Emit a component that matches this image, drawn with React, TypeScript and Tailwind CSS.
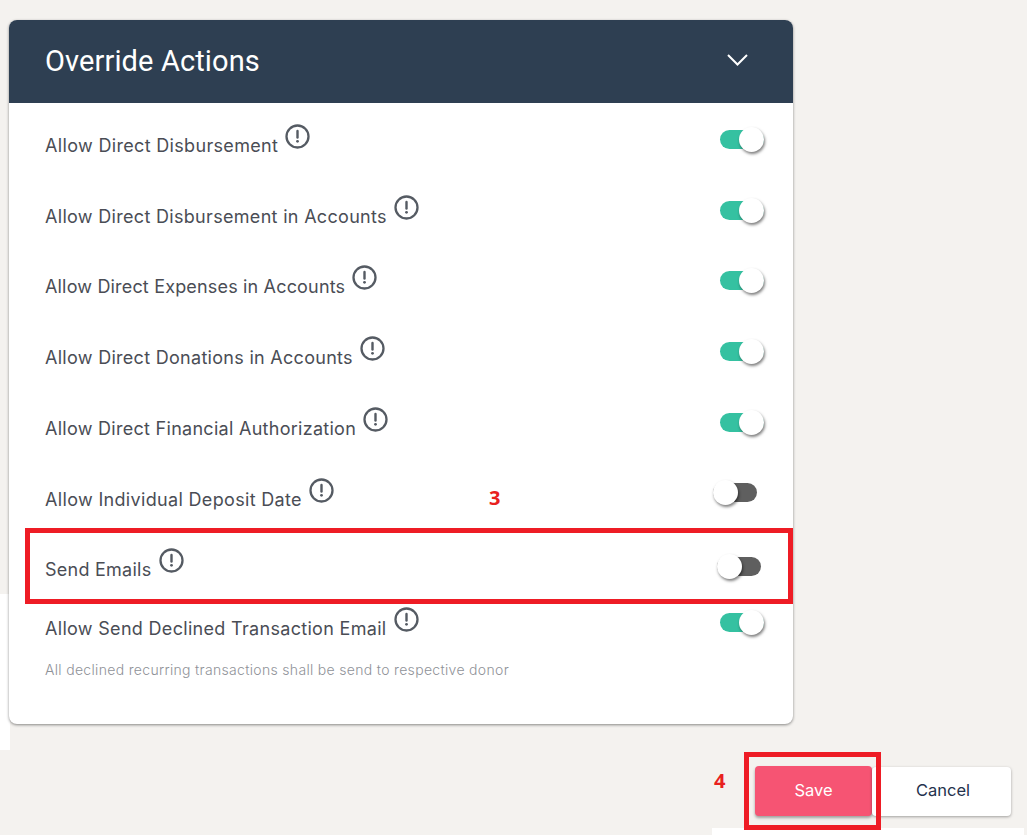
const rows = [
  { label: "Allow Direct Disbursement", labelW: "w-[233px]", track: "tracking-[0.33px]", on: true, toggle: "-mt-[12px] mr-[29px]" },
  { label: "Allow Direct Disbursement in Accounts", labelW: "w-[342px]", track: "tracking-[0.31px]", on: true, toggle: "-mt-[12px] mr-[29px]" },
  { label: "Allow Direct Expenses in Accounts", labelW: "w-[300px]", track: "tracking-[0.17px]", on: true, toggle: "-mt-[12px] mr-[29px]" },
  { label: "Allow Direct Donations in Accounts", labelW: "w-[308px]", track: "tracking-[0.29px]", on: true, toggle: "-mt-[12px] mr-[29px]" },
  { label: "Allow Direct Financial Authorization", labelW: "w-[311px]", track: "tracking-[0.28px]", on: true, toggle: "-mt-[12px] mr-[29px]" },
  { label: "Allow Individual Deposit Date", labelW: "w-[257px]", track: "tracking-[0.33px]", on: false, toggle: "-mt-[14px] mr-[36px]" },
  { label: "Send Emails", labelW: "w-[107px]", track: "tracking-[0.25px]", on: false, toggle: "-mt-[6px] mr-[32px]" },
];

function InfoIcon() {
  return (
    <svg width="25" height="25" viewBox="0 0 25 25" className="shrink-0 -mt-[18px] ml-[7px]">
      <circle cx="12.5" cy="12.5" r="11" fill="none" stroke="#555b63" strokeWidth="2.3" />
      <path d="M12.5 7v6.5" stroke="#555b63" strokeWidth="2.4" strokeLinecap="round" />
      <circle cx="12.5" cy="17.3" r="1.4" fill="#555b63" />
    </svg>
  );
}

function Toggle({ on, className }: { on: boolean; className: string }) {
  return (
    <div className={`relative h-[19px] w-[44px] rounded-full ${on ? "bg-[#35c1a1]" : "bg-[#5f5f5f]"} ${className}`}>
      <div
        className={`absolute -top-[3px] h-[25px] w-[25px] rounded-full bg-white shadow-[1px_2px_3px_rgba(0,0,0,0.5)] ${on ? "right-0" : "left-0"}`}
      />
    </div>
  );
}

function Row({ label, labelW, track, on, toggle }: { label: string; labelW: string; track: string; on: boolean; toggle: string }) {
  return (
    <div className="flex h-[70.75px] items-center justify-between">
      <div className="flex items-center">
        <span className={`${labelW} ${track} whitespace-nowrap text-[18px] text-[#4a4d55]`}>{label}</span>
        <InfoIcon />
      </div>
      <Toggle on={on} className={toggle} />
    </div>
  );
}

export default function App() {
  return (
    <div className="relative h-[835px] w-[1027px] overflow-hidden bg-[#f4f2ef] pl-[9px] pt-5 font-['Inter',sans-serif]">
      {/* stray white bits from the original capture */}
      <div className="absolute left-0 top-[594px] h-[156px] w-[10px] bg-white" />
      <div className="absolute left-[712px] top-[828px] h-[7px] w-[312px] bg-white" />

      <div className="relative w-[784px] rounded-lg bg-white shadow-[0_1px_3px_rgba(0,0,0,0.45)]">
        <div className="flex h-[83px] items-center justify-between rounded-t-lg bg-[#2e3f52] pl-9 pr-[45px]">
          <h1 className="font-['Roboto',sans-serif] text-[29px] font-normal tracking-[0.12px] text-white">Override Actions</h1>
          <svg width="21" height="12" viewBox="0 0 21 12" className="-mt-[3px]">
            <path d="M1 1l9.5 9.5L20 1" fill="none" stroke="#fff" strokeWidth="2" />
          </svg>
        </div>

        <div className="h-[621px] pl-9 pt-[7px]">
          {rows.map((row) => (
            <Row key={row.label} {...row} />
          ))}
          <div className="-mt-[12px] flex h-[71px] items-center justify-between">
            <div className="flex items-center">
              <span className="w-[342px] whitespace-nowrap text-[18px] tracking-[0.31px] text-[#4a4d55]">
                Allow Send Declined Transaction Email
              </span>
              <InfoIcon />
            </div>
            <Toggle on className="-mt-[12px] mr-[29px]" />
          </div>
          <p className="-mt-[5px] whitespace-nowrap text-[14px] font-light tracking-[0.32px] text-[#8f9298]">
            All declined recurring transactions shall be send to respective donor
          </p>
        </div>
      </div>

      <div className="mt-[42px] flex items-start justify-end pr-4">
        <button className="h-[50px] w-[117px] rounded bg-[#f65473] pb-[2px] text-[16.5px] text-white shadow-[0_2px_3px_rgba(0,0,0,0.35)]">
          Save
        </button>
        <button className="mt-px h-[49px] w-[139px] rounded bg-white pb-[2px] pl-[3px] text-[16.5px] text-[#24324d] shadow-[0_1px_3px_rgba(0,0,0,0.35)]">
          Cancel
        </button>
      </div>

      {/* red annotations drawn over the screenshot */}
      <div className="absolute left-[25px] top-[528px] h-[76px] w-[768px] border-[5px] border-[#ee1c25]" />
      <div className="absolute left-[744px] top-[752px] h-[78px] w-[137px] border-[5px] border-[#ee1c25]" />
      <span className="absolute left-[489px] top-[483px] font-['Open_Sans',sans-serif] text-[20px] font-bold text-[#e8211e]">3</span>
      <span className="absolute left-[714px] top-[766px] font-['Open_Sans',sans-serif] text-[20px] font-bold text-[#e8211e]">4</span>
    </div>
  );
}
